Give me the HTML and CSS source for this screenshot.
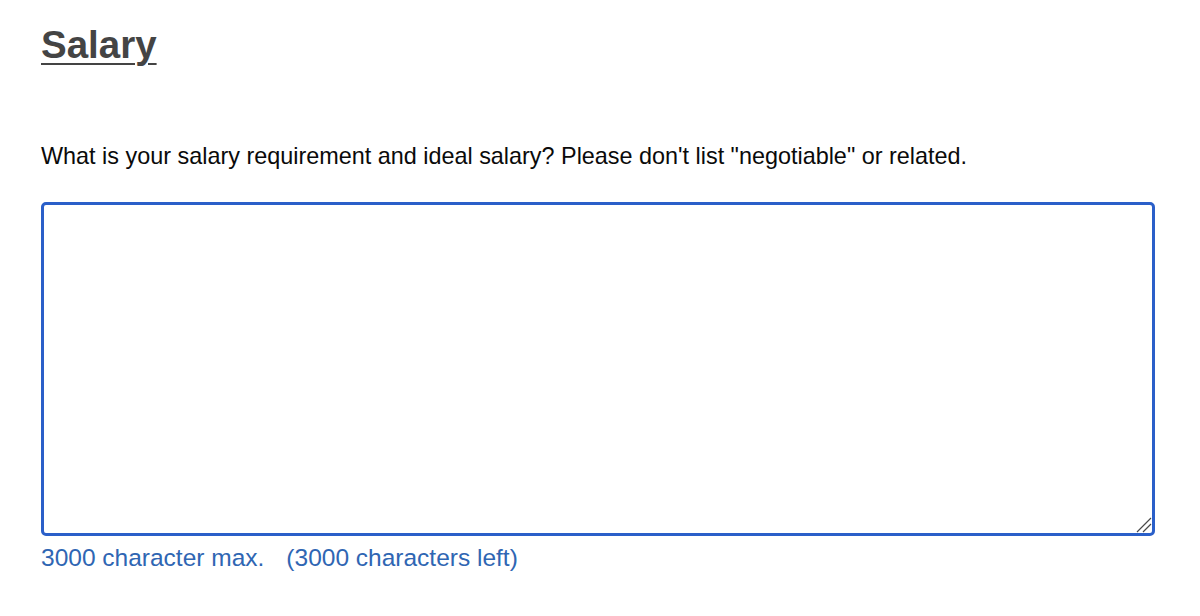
FILE: index.html
```html
<!DOCTYPE html>
<html>
<head>
<meta charset="utf-8">
<link rel="stylesheet" href="styles.css">
</head>
<body>
<main class="page">
  <h2 class="title">Salary</h2>
  <label class="question" for="salary">What is your salary requirement and ideal salary? Please don't list "negotiable" or related.</label>
  <div class="field">
    <textarea id="salary" class="answer"></textarea>
    <svg class="grip" width="16" height="16" viewBox="0 0 16 16" aria-hidden="true">
      <path d="M1 15 L15 1 M7 15 L15 7" stroke="#4a4a4a" stroke-width="1.2" fill="none"/>
    </svg>
  </div>
  <div class="counter"><span>3000 character max.</span><span>(3000 characters left)</span></div>
</main>
</body>
</html>
```
FILE: styles.css
```css
html, body {
  margin: 0;
  padding: 0;
  background: #ffffff;
}
.page {
  padding: 23px 45px 0 41px;
  font-family: "Liberation Sans", Arial, sans-serif;
  display: flex;
  flex-direction: column;
}
.title {
  margin: 0;
  font-size: 38.5px;
  font-weight: 700;
  color: #444444;
  text-decoration: underline;
  text-decoration-thickness: 2px;
  text-underline-offset: 5px;
  line-height: 44px;
}
.question {
  margin-top: 75px;
  font-size: 23.4px;
  color: #0a0a0a;
  line-height: 28px;
}
.field {
  position: relative;
  margin-top: 32px;
}
.answer {
  display: block;
  box-sizing: border-box;
  width: 100%;
  height: 334px;
  margin: 0;
  border: 3px solid #2a5fc9;
  border-radius: 5px;
  outline: none;
  resize: none;
  background: #fff;
}
.grip {
  position: absolute;
  right: 3px;
  bottom: 3px;
}
.counter {
  margin-top: 8px;
  display: flex;
  gap: 22px;
  font-size: 24.5px;
  color: #2f66b3;
  line-height: 28px;
}
```
